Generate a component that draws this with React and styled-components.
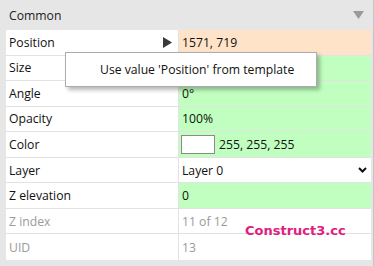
import React from "react";
import styled, { createGlobalStyle } from "styled-components";

const GlobalStyle = createGlobalStyle`
  html, body { margin: 0; padding: 0; background: #e6e6e6; }
  body { font-family: "Open Sans", "Noto Sans", sans-serif; }
`;

const Panel = styled.div`
  position: relative;
  width: 374px;
  height: 266px;
  box-sizing: border-box;
  padding: 0 2px 0 6px;
  border-right: 1px solid #c4c4c4;
  background: #e6e6e6;
  overflow: hidden;
`;

const Header = styled.div`
  height: 30px;
  display: flex;
  align-items: center;
  justify-content: space-between;
  padding: 0 7px 0 3px;
  font-size: 12.2px;
  color: #222;
`;

const Table = styled.div`
  display: flex;
  flex-direction: column;
  background: #fff;
`;

const Row = styled.div`
  display: grid;
  grid-template-columns: 173px 1fr;
  height: 25.56px;
  box-sizing: border-box;
  border-bottom: ${(p) => (p.$last ? "none" : "1px solid #e2e2e2")};
  font-size: 12.2px;
  color: ${(p) => (p.$disabled ? "#9a9a9a" : "#111")};
`;

const Label = styled.div`
  display: flex;
  align-items: center;
  justify-content: space-between;
  padding: 0 6px 0 3px;
  border-right: 1px solid #e2e2e2;
  background: #fff;
`;

const Value = styled.div`
  display: flex;
  align-items: center;
  gap: 4px;
  padding: 0 4px 0 3px;
  background: ${(p) =>
    p.$state === "changed" ? "#ffe3c8" : p.$state === "template" ? "#c0ffc0" : "#fff"};
`;

const Swatch = styled.span`
  width: 32px;
  height: 17px;
  background: #fff;
  border: 1px solid #8a8a8a;
  margin-left: -1px;
`;

const Spacer = styled.span`
  flex: 1;
`;

const Tooltip = styled.div`
  position: absolute;
  left: 65px;
  top: 52px;
  width: 252px;
  height: 35px;
  box-sizing: border-box;
  padding-left: 34px;
  background: #fff;
  border: 1px solid #acacac;
  box-shadow: 3px 3px 4px rgba(0, 0, 0, 0.28);
  display: flex;
  align-items: center;
  font-size: 12.2px;
  color: #111;
`;

const Watermark = styled.div`
  position: absolute;
  left: 245px;
  top: 223px;
  font-family: "DejaVu Sans", sans-serif;
  font-weight: bold;
  font-size: 13px;
  color: #e0207f;
`;

const Caret = () => (
  <svg width="11" height="8" viewBox="0 0 11 8">
    <polygon points="0,0 11,0 5.5,8" fill="#9a9a9a" />
  </svg>
);

const PlayArrow = () => (
  <svg width="9" height="11" viewBox="0 0 9 11">
    <polygon points="0,0 9,5.5 0,11" fill="#3a3a3a" />
  </svg>
);

const Chevron = () => (
  <svg width="9" height="6" viewBox="0 0 9 6">
    <polyline points="1,1 4.5,4.5 8,1" fill="none" stroke="#111" strokeWidth="2" />
  </svg>
);

const rows = [
  { label: "Position", value: "1571, 719", state: "changed", arrow: true },
  { label: "Size", value: "", state: "template" },
  { label: "Angle", value: "0°", state: "template" },
  { label: "Opacity", value: "100%", state: "template" },
  { label: "Color", value: "255, 255, 255", state: "template", swatch: true },
  { label: "Layer", value: "Layer 0", state: "plain", dropdown: true },
  { label: "Z elevation", value: "0", state: "template" },
  { label: "Z index", value: "11 of 12", state: "plain", disabled: true },
  { label: "UID", value: "13", state: "plain", disabled: true },
];

export default function App() {
  return (
    <Panel>
      <GlobalStyle />
      <Header>
        <span>Common</span>
        <Caret />
      </Header>
      <Table>
        {rows.map((r, i) => (
          <Row key={r.label} $disabled={r.disabled} $last={i === rows.length - 1}>
            <Label>
              <span>{r.label}</span>
              {r.arrow && <PlayArrow />}
            </Label>
            <Value $state={r.state}>
              {r.swatch && <Swatch />}
              <span>{r.value}</span>
              {r.dropdown && (
                <>
                  <Spacer />
                  <Chevron />
                </>
              )}
            </Value>
          </Row>
        ))}
      </Table>
      <Tooltip>Use value 'Position' from template</Tooltip>
      <Watermark>Construct3.cc</Watermark>
    </Panel>
  );
}
